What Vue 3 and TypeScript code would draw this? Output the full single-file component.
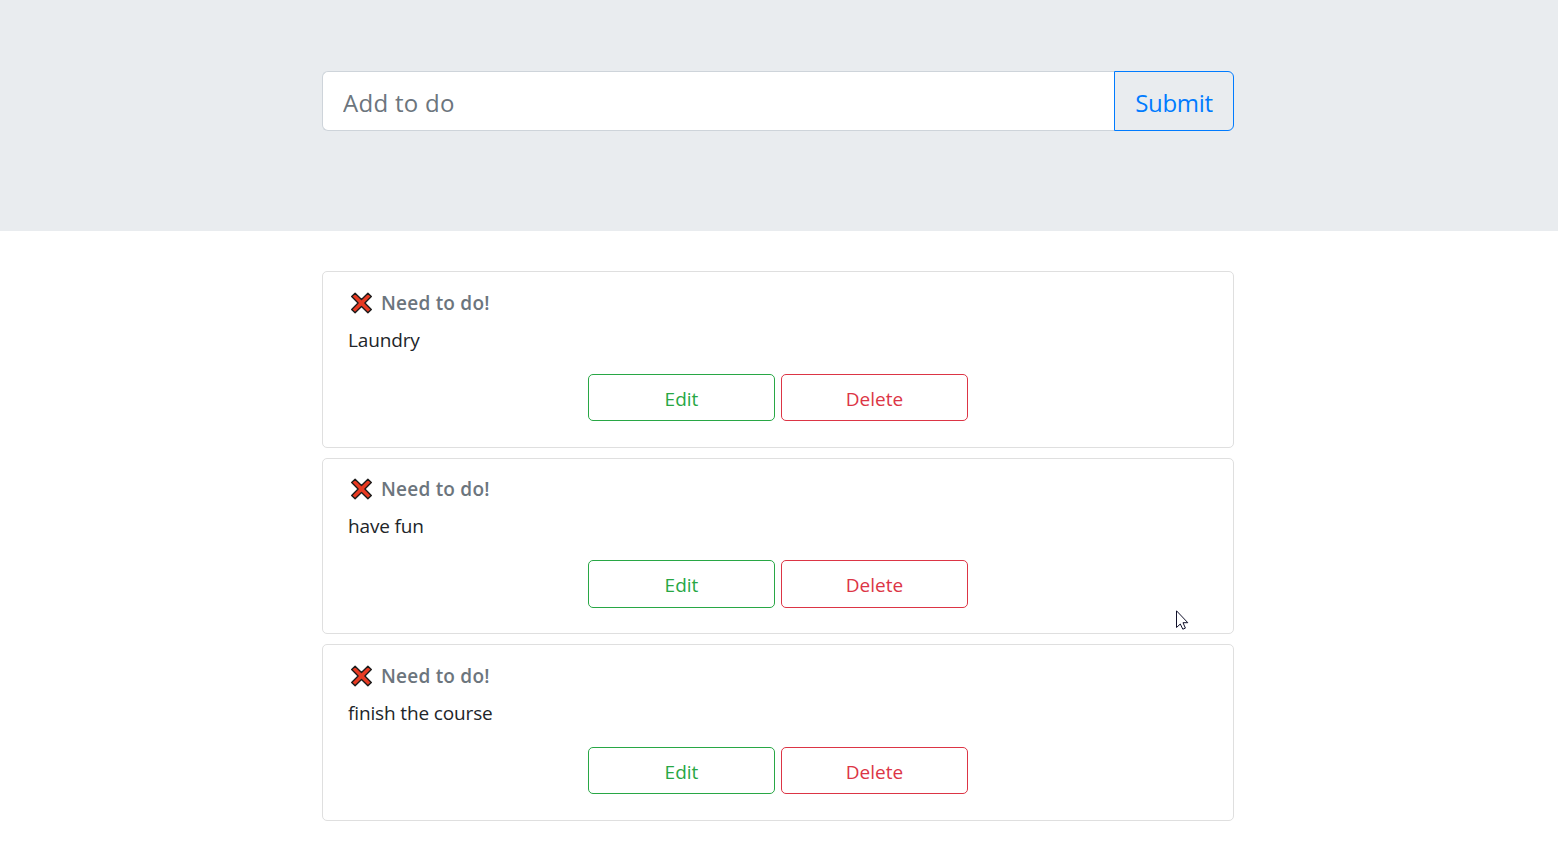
<script setup lang="ts">
import { ref } from 'vue'

interface Todo {
  id: number
  text: string
}

const draft = ref('')
const todos = ref<Todo[]>([
  { id: 1, text: 'Laundry' },
  { id: 2, text: 'have fun' },
  { id: 3, text: 'finish the course' },
])

function addTodo() {
  const text = draft.value.trim()
  if (!text) return
  todos.value.push({ id: Date.now(), text })
  draft.value = ''
}

function removeTodo(id: number) {
  todos.value = todos.value.filter((todo) => todo.id !== id)
}
</script>

<template>
  <div class="page">
    <header class="hero">
      <form class="entry" @submit.prevent="addTodo">
        <input v-model="draft" class="field" type="text" placeholder="Add to do" />
        <button class="submit" type="submit">Submit</button>
      </form>
    </header>
    <main class="list">
      <article v-for="todo in todos" :key="todo.id" class="card">
        <h6 class="status">
          <svg class="cross" viewBox="0 0 22 22" aria-hidden="true">
            <path
              d="M4.1 1.2 10.5 7.6 16.9 1.2 20.3 4.6 13.9 11 20.3 17.4 16.9 20.8 10.5 14.4 4.1 20.8.7 17.4 7.1 11 .7 4.6Z"
              fill="#e83a22"
              stroke="#1c1c1c"
              stroke-width="1.35"
              stroke-linejoin="round"
            />
          </svg>
          <span class="status-text">Need to do!</span>
        </h6>
        <p class="text">{{ todo.text }}</p>
        <div class="actions">
          <button class="btn edit" type="button">Edit</button>
          <button class="btn delete" type="button" @click="removeTodo(todo.id)">Delete</button>
        </div>
      </article>
    </main>
    <svg class="cursor" viewBox="0 0 13 20" aria-hidden="true">
      <path
        d="M.5.8V17.5L4.3 14 6.8 19.2 9.4 18.1 7 12.7H11.8Z"
        fill="#fff"
        stroke="#10102a"
        stroke-width="1"
      />
    </svg>
  </div>
</template>

<style>
body {
  margin: 0;
  background: #fff;
}
</style>

<style scoped>
.page {
  position: relative;
  height: 842px;
  overflow: hidden;
  font-family: 'Open Sans', 'Noto Sans', sans-serif;
  color: #212529;
}
.page * {
  box-sizing: border-box;
}
.hero {
  height: 231px;
  padding-top: 71px;
  background: #e9ecef;
}
.entry {
  display: flex;
  width: 912px;
  height: 60px;
  margin-left: 322px;
}
.field {
  width: 792px;
  padding: 3px 20px 0;
  border: 1px solid #ced4da;
  border-right: 0;
  border-radius: 6px 0 0 6px;
  background: #fff;
  color: #495057;
  font: 400 24px 'Open Sans', sans-serif;
  letter-spacing: 0.28px;
  outline: none;
}
.field::placeholder {
  color: #6c757d;
  opacity: 1;
}
.submit {
  width: 120px;
  padding: 3px 0 0;
  border: 1px solid #007bff;
  border-radius: 0 6px 6px 0;
  background: transparent;
  color: #007bff;
  font: 400 24px 'Open Sans', sans-serif;
  letter-spacing: -0.3px;
}
.list {
  display: flex;
  flex-direction: column;
  gap: 10px;
  width: 912px;
  margin: 40px 0 0 322px;
}
.card {
  height: 176.5px;
  padding: 18.8px 25px 0;
  border: 1px solid #dfdfdf;
  border-radius: 5px;
  background: #fff;
}
.status {
  display: flex;
  align-items: center;
  height: 24px;
  margin: 0;
  padding-left: 3px;
  color: #6c757d;
  font-size: 19px;
  font-weight: 600;
  letter-spacing: 0.22px;
}
.cross {
  width: 22px;
  height: 22px;
  margin-right: 8px;
}
.text {
  height: 30px;
  margin: 10px 0 18.9px;
  font-size: 19px;
  line-height: 30px;
  letter-spacing: -0.14px;
}
.actions {
  display: flex;
  justify-content: center;
  gap: 6px;
}
.btn {
  width: 187px;
  height: 47.5px;
  padding: 3px 0 0;
  border: 1px solid;
  border-radius: 5px;
  background: transparent;
  font: 400 19px 'Open Sans', sans-serif;
}
.edit {
  border-color: #28a745;
  color: #28a745;
}
.delete {
  border-color: #dc3545;
  color: #dc3545;
}
.cursor {
  position: absolute;
  left: 1176px;
  top: 610px;
  width: 13px;
  height: 20px;
}
</style>
